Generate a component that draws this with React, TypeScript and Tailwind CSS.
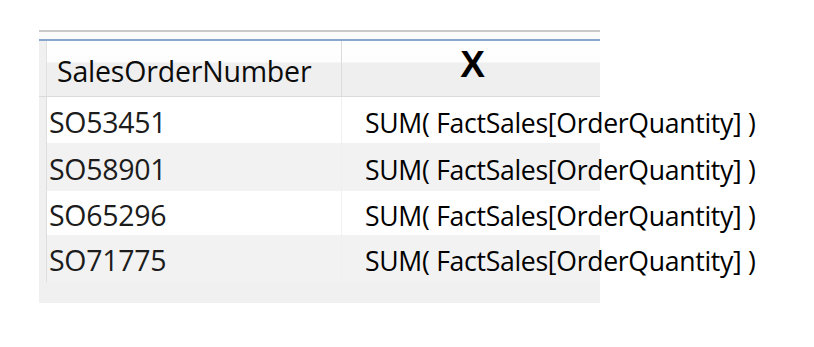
import React from "react"

// filas de la tabla
const rows = [
  { id: "SO53451", h: "h-[46px]", bg: "bg-white" },
  { id: "SO58901", h: "h-[48px]", bg: "bg-[#f2f2f2]" },
  { id: "SO65296", h: "h-[44px]", bg: "bg-white" },
  { id: "SO71775", h: "h-[47px]", bg: "bg-[#f2f2f2]" },
]

const formula = "SUM( FactSales[OrderQuantity] )"

export default function App() {
  return (
    <div className="w-[814px] h-[347px] bg-white pl-[39px] pt-[30px] overflow-hidden">
      <div className="w-[561px]">
        {/* bordes superiores */}
        <div className="h-[2px] bg-[#c9c9c9]" />
        <div className="h-[7px] bg-[#fbfbfb]" />
        <div className="h-[2px] bg-[#89a7cc]" />

        {/* cabecera */}
        <div className="flex h-[56px] border-b border-[#dadada] bg-[linear-gradient(to_bottom,#ffffff_0%,#fdfdfd_38%,#efefef_40%,#efefef_100%)]">
          <div className="w-[8px] shrink-0 bg-[#f0f0f0] border-r border-[#e2e2e2]" />
          <div className="w-[295px] shrink-0 border-r border-[#dcdcdc] flex items-center pl-[10px] pt-[6px]">
            <span className="text-[28.5px] text-[#0c0c0c] font-['Open_Sans',sans-serif] tracking-[-0.2px]">
              SalesOrderNumber
            </span>
          </div>
          <div className="flex-1 min-w-0 flex justify-center items-start pt-[4px]">
            <span className="text-[37px] leading-[40px] font-bold text-black font-['Liberation_Sans',Arial,sans-serif] pl-[3px]">
              X
            </span>
          </div>
        </div>

        {/* filas */}
        {rows.map((r) => (
          <div key={r.id} className={`flex ${r.h} ${r.bg}`}>
            <div className="w-[8px] shrink-0 bg-[#f0f0f0] border-r border-[#dedede]" />
            <div className="w-[295px] shrink-0 border-r border-[#f0f0f0] flex items-center pl-[2px] pt-[4px]">
              <span className="text-[28.5px] text-[#1c1c1c] font-['Open_Sans',sans-serif] tracking-[-0.3px]">
                {r.id}
              </span>
            </div>
            <div className="flex-1 min-w-0 flex items-center pl-[23px] pt-[7px] whitespace-nowrap">
              <span className="text-[26.6px] text-black font-['Open_Sans',sans-serif] tracking-[-0.3px]">
                {formula}
              </span>
            </div>
          </div>
        ))}

        {/* zona inferior */}
        <div className="h-[21px] bg-[#f0f0f0]" />
      </div>
    </div>
  )
}
